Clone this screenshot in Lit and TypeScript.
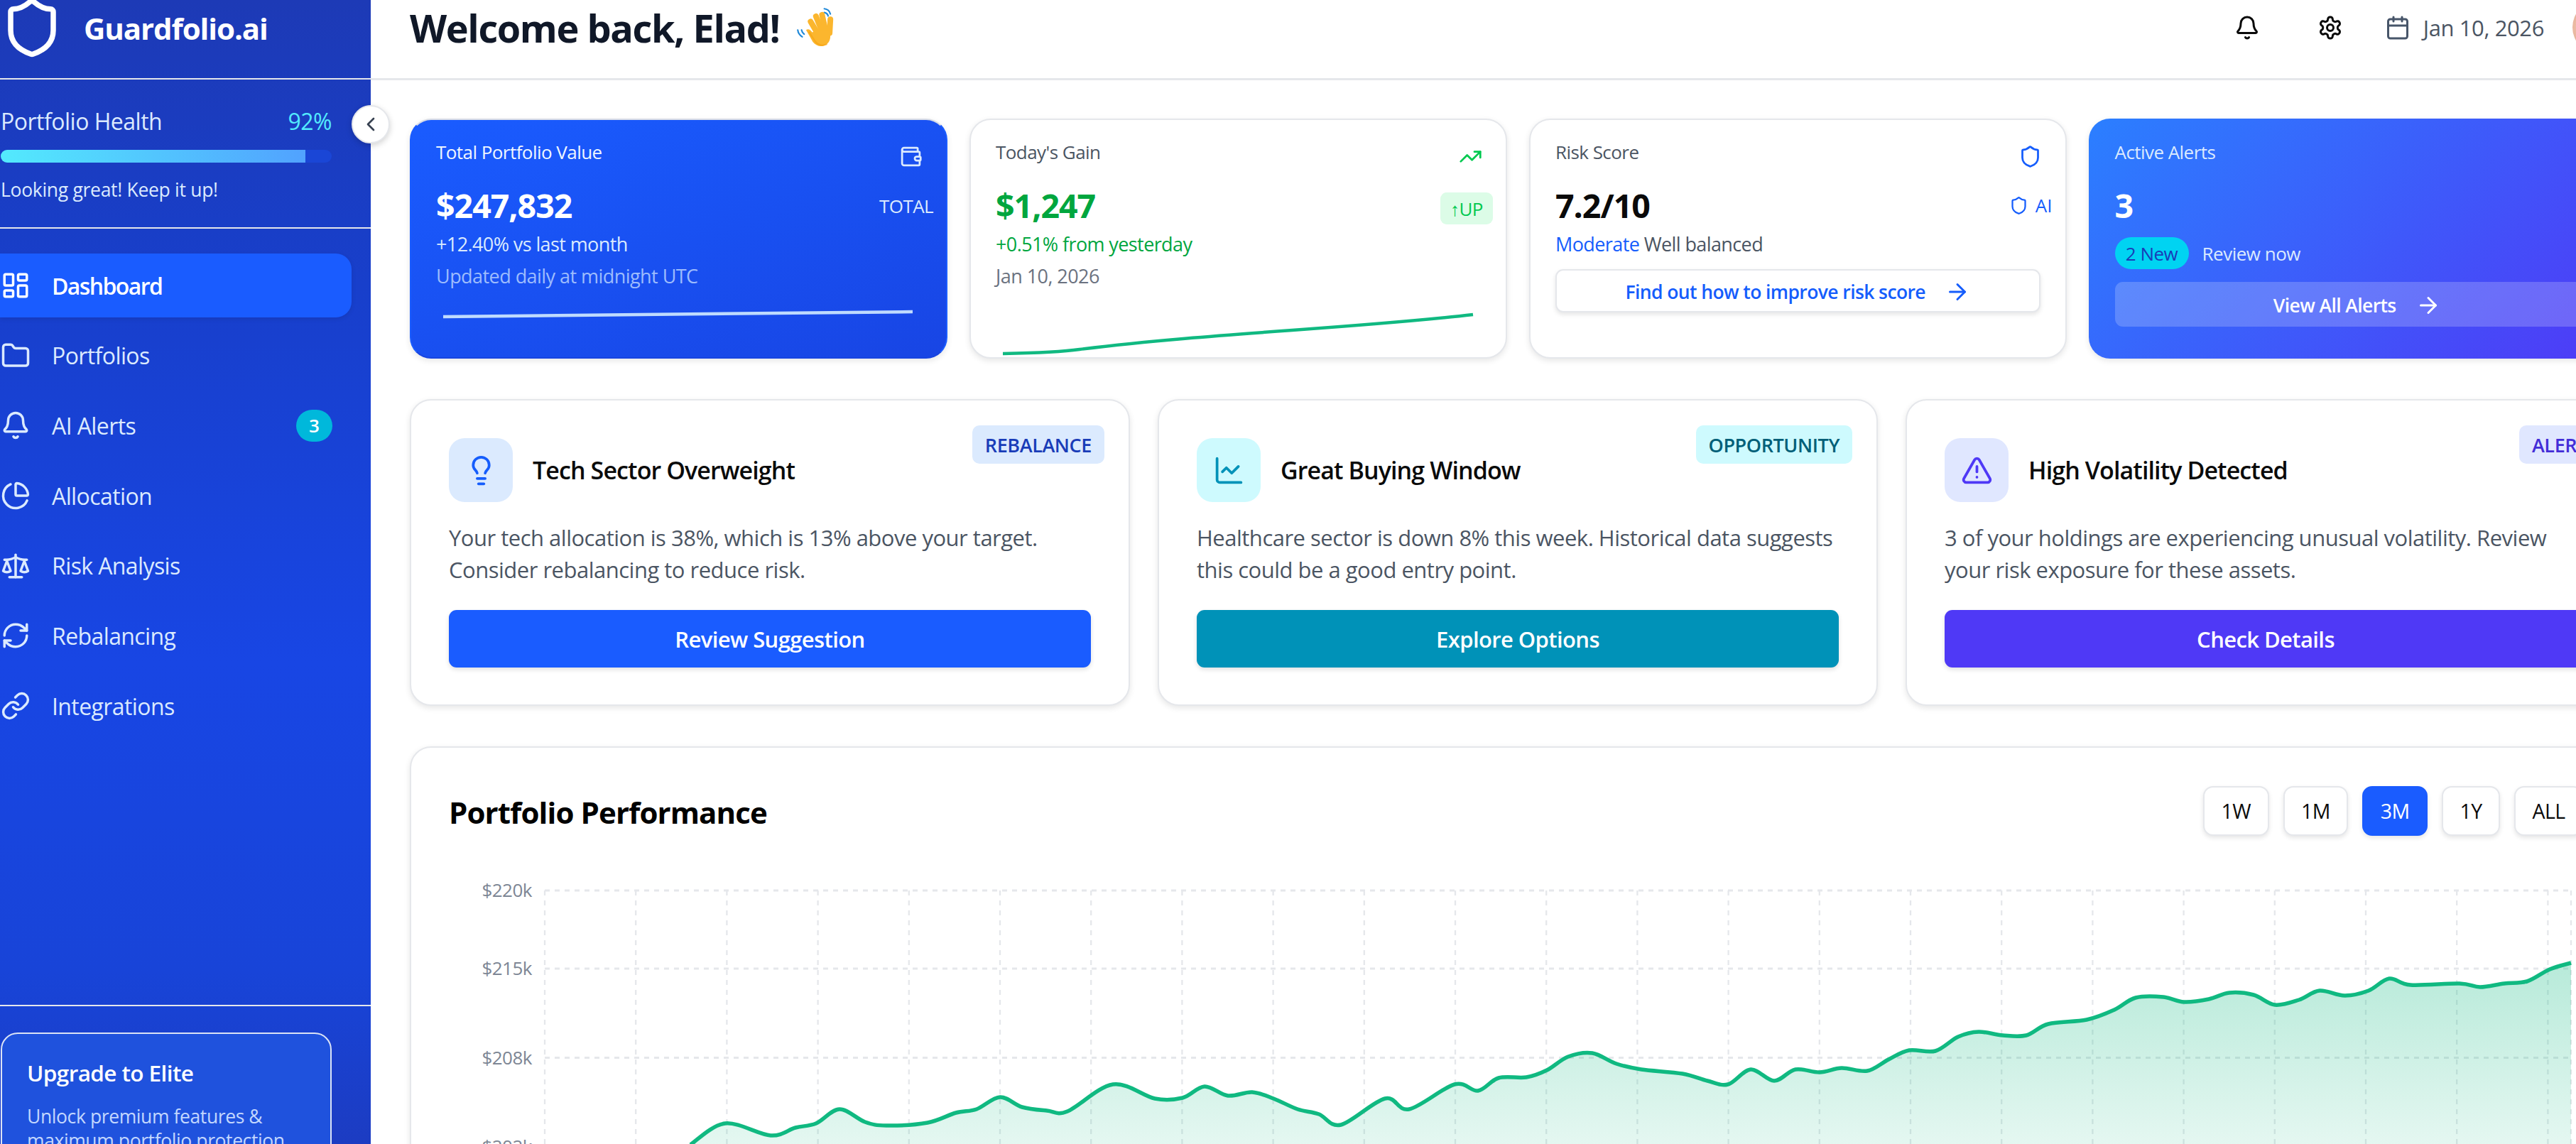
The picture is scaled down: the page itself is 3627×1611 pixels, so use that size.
import { LitElement, css, html, svg } from 'lit';
import { customElement } from 'lit/decorators.js';

const ICONS: Record<string, string[]> = {
  shield: ['M20 13c0 5-3.5 7.5-7.66 8.95a1 1 0 0 1-.67-.01C7.5 20.5 4 18 4 13V6a1 1 0 0 1 1-1c2 0 4.5-1.2 6.24-2.72a1.17 1.17 0 0 1 1.52 0C14.51 3.81 17 5 19 5a1 1 0 0 1 1 1z'],
  dashboard: ['M4 3h5a1 1 0 0 1 1 1v7a1 1 0 0 1-1 1H4a1 1 0 0 1-1-1V4a1 1 0 0 1 1-1z', 'M15 3h5a1 1 0 0 1 1 1v3a1 1 0 0 1-1 1h-5a1 1 0 0 1-1-1V4a1 1 0 0 1 1-1z', 'M15 12h5a1 1 0 0 1 1 1v7a1 1 0 0 1-1 1h-5a1 1 0 0 1-1-1v-7a1 1 0 0 1 1-1z', 'M4 16h5a1 1 0 0 1 1 1v3a1 1 0 0 1-1 1H4a1 1 0 0 1-1-1v-3a1 1 0 0 1 1-1z'],
  folder: ['M20 20a2 2 0 0 0 2-2V8a2 2 0 0 0-2-2h-7.9a2 2 0 0 1-1.69-.9L9.6 3.9A2 2 0 0 0 7.93 3H4a2 2 0 0 0-2 2v13a2 2 0 0 0 2 2Z'],
  bell: ['M10.268 21a2 2 0 0 0 3.464 0', 'M3.262 15.326A1 1 0 0 0 4 17h16a1 1 0 0 0 .74-1.673C19.41 13.956 18 12.499 18 8A6 6 0 0 0 6 8c0 4.499-1.411 5.956-2.738 7.326'],
  pie: ['M21 12c.552 0 1.005-.449.95-.998a10 10 0 0 0-8.953-8.951c-.55-.055-.998.398-.998.95v8a1 1 0 0 0 1 1z', 'M21.21 15.89A10 10 0 1 1 8 2.83'],
  scale: ['m16 16 3-8 3 8c-.87.65-1.92 1-3 1s-2.13-.35-3-1Z', 'm2 16 3-8 3 8c-.87.65-1.92 1-3 1s-2.13-.35-3-1Z', 'M7 21h10', 'M12 3v18', 'M3 7h2c2 0 5-1 7-2 2 1 5 2 7 2h2'],
  refresh: ['M3 12a9 9 0 0 1 9-9 9.75 9.75 0 0 1 6.74 2.74L21 8', 'M21 3v5h-5', 'M21 12a9 9 0 0 1-9 9 9.75 9.75 0 0 1-6.74-2.74L3 16', 'M8 16H3v5'],
  link: ['M10 13a5 5 0 0 0 7.54.54l3-3a5 5 0 0 0-7.07-7.07l-1.72 1.71', 'M14 11a5 5 0 0 0-7.54-.54l-3 3a5 5 0 0 0 7.07 7.07l1.71-1.71'],
  settings: ['M12.22 2h-.44a2 2 0 0 0-2 2v.18a2 2 0 0 1-1 1.73l-.43.25a2 2 0 0 1-2 0l-.15-.08a2 2 0 0 0-2.73.73l-.22.38a2 2 0 0 0 .73 2.73l.15.1a2 2 0 0 1 1 1.72v.51a2 2 0 0 1-1 1.74l-.15.09a2 2 0 0 0-.73 2.73l.22.38a2 2 0 0 0 2.73.73l.15-.08a2 2 0 0 1 2 0l.43.25a2 2 0 0 1 1 1.73V20a2 2 0 0 0 2 2h.44a2 2 0 0 0 2-2v-.18a2 2 0 0 1 1-1.73l.43-.25a2 2 0 0 1 2 0l.15.08a2 2 0 0 0 2.73-.73l.22-.39a2 2 0 0 0-.73-2.73l-.15-.08a2 2 0 0 1-1-1.74v-.5a2 2 0 0 1 1-1.74l.15-.09a2 2 0 0 0 .73-2.73l-.22-.38a2 2 0 0 0-2.73-.73l-.15.08a2 2 0 0 1-2 0l-.43-.25a2 2 0 0 1-1-1.73V4a2 2 0 0 0-2-2z', 'M15 12a3 3 0 1 1-6 0 3 3 0 0 1 6 0z'],
  calendar: ['M8 2v4', 'M16 2v4', 'M5 4h14a2 2 0 0 1 2 2v14a2 2 0 0 1-2 2H5a2 2 0 0 1-2-2V6a2 2 0 0 1 2-2z', 'M3 10h18'],
  wallet: ['M19 7V4a1 1 0 0 0-1-1H5a2 2 0 0 0 0 4h15a1 1 0 0 1 1 1v4h-3a2 2 0 0 0 0 4h3a1 1 0 0 0 1-1v-2a1 1 0 0 0-1-1', 'M3 5v14a2 2 0 0 0 2 2h15a1 1 0 0 0 1-1v-4'],
  trending: ['M22 7 13.5 15.5 8.5 10.5 2 17', 'M16 7h6v6'],
  arrow: ['M5 12h14', 'm12 5 7 7-7 7'],
  chevron: ['m15 18-6-6 6-6'],
  bulb: ['M15 14c.2-1 .7-1.7 1.5-2.5 1-.9 1.5-2.2 1.5-3.5A6 6 0 0 0 6 8c0 1 .2 2.2 1.5 3.5.7.7 1.3 1.5 1.5 2.5', 'M9 18h6', 'M10 22h4'],
  chart: ['M3 3v16a2 2 0 0 0 2 2h16', 'm19 9-5 5-4-4-3 3'],
  alert: ['m21.73 18-8-14a2 2 0 0 0-3.48 0l-8 14A2 2 0 0 0 4 21h16a2 2 0 0 0 1.73-3', 'M12 9v4', 'M12 17h.01'],
};

function icon(name: string, cls = '') {
  return html`<svg class="icon ${cls}" viewBox="0 0 24 24" fill="none" stroke="currentColor" stroke-width="2" stroke-linecap="round" stroke-linejoin="round">
    ${ICONS[name].map((d) => svg`<path d=${d}></path>`)}
  </svg>`;
}

const NAV = [
  { label: 'Dashboard', icon: 'dashboard', active: true },
  { label: 'Portfolios', icon: 'folder' },
  { label: 'AI Alerts', icon: 'bell', badge: '3' },
  { label: 'Allocation', icon: 'pie' },
  { label: 'Risk Analysis', icon: 'scale' },
  { label: 'Rebalancing', icon: 'refresh' },
  { label: 'Integrations', icon: 'link' },
];

const INSIGHTS = [
  { kind: 'blue', icon: 'bulb', tag: 'REBALANCE', title: 'Tech Sector Overweight', text: 'Your tech allocation is 38%, which is 13% above your target. Consider rebalancing to reduce risk.', action: 'Review Suggestion' },
  { kind: 'teal', icon: 'chart', tag: 'OPPORTUNITY', title: 'Great Buying Window', text: 'Healthcare sector is down 8% this week. Historical data suggests this could be a good entry point.', action: 'Explore Options' },
  { kind: 'indigo', icon: 'alert', tag: 'ALERT', title: 'High Volatility Detected', text: '3 of your holdings are experiencing unusual volatility. Review your risk exposure for these assets.', action: 'Check Details' },
];

// page coordinates of the performance curve, read off the screenshot
const CURVE: [number, number][] = [
  [972, 1612], [1021, 1582], [1085, 1599], [1120, 1588], [1149, 1582], [1182, 1562], [1218, 1580], [1248, 1585], [1306, 1581], [1346, 1567],
  [1375, 1562], [1408, 1545], [1439, 1559], [1474, 1564], [1503, 1565], [1567, 1527], [1626, 1547], [1665, 1546], [1696, 1530], [1729, 1543],
  [1763, 1538], [1793, 1547], [1827, 1562], [1857, 1569], [1888, 1584], [1950, 1547], [1984, 1562], [2048, 1527], [2081, 1536], [2110, 1518],
  [2149, 1517], [2178, 1507], [2208, 1488], [2242, 1483], [2276, 1498], [2311, 1506], [2369, 1512], [2404, 1522], [2433, 1527], [2465, 1506],
  [2498, 1522], [2528, 1506], [2562, 1510], [2593, 1504], [2629, 1508], [2659, 1492], [2688, 1479], [2725, 1480], [2757, 1460], [2786, 1453],
  [2820, 1458], [2853, 1458], [2884, 1442], [2938, 1436], [2977, 1422], [3007, 1405], [3046, 1404], [3075, 1411], [3110, 1407], [3139, 1398],
  [3173, 1401], [3203, 1415], [3237, 1408], [3266, 1395], [3301, 1402], [3335, 1395], [3364, 1378], [3394, 1387], [3463, 1385], [3492, 1390],
  [3526, 1385], [3558, 1382], [3590, 1365], [3620, 1356],
];

const CHART_X = 632;
const CHART_Y = 1230;
const PLOT_LEFT = 767 - CHART_X;
const PLOT_RIGHT = 3620 - CHART_X;
const GRID_Y = [1254, 1364, 1489.5, 1615].map((y) => y - CHART_Y);
const LABELS = ['$220k', '$215k', '$208k', '$202k'];

function smoothPath(points: [number, number][]) {
  const p = points.map(([x, y]) => [x - CHART_X, y - CHART_Y]);
  let d = `M${p[0][0]} ${p[0][1]}`;
  for (let i = 0; i < p.length - 1; i++) {
    const a = p[Math.max(i - 1, 0)];
    const b = p[i];
    const c = p[i + 1];
    const e = p[Math.min(i + 2, p.length - 1)];
    const c1x = b[0] + (c[0] - a[0]) / 6;
    const c1y = b[1] + (c[1] - a[1]) / 6;
    const c2x = c[0] - (e[0] - b[0]) / 6;
    const c2y = c[1] - (e[1] - b[1]) / 6;
    d += ` C${c1x.toFixed(1)} ${c1y.toFixed(1)} ${c2x.toFixed(1)} ${c2y.toFixed(1)} ${c[0]} ${c[1]}`;
  }
  return d;
}

@customElement('app-root')
export class AppRoot extends LitElement {
  static styles = css`
    :host {
      display: block;
      width: 3627px;
      height: 1611px;
      overflow: hidden;
      background: #fff;
      font-family: 'Open Sans', 'Noto Sans', sans-serif;
      color: #0a0a0a;
    }
    * { box-sizing: border-box; }
    .icon { display: block; flex: none; }
    .layout { display: flex; width: 3627px; height: 1611px; }

    /* sidebar */
    .sidebar {
      position: relative;
      z-index: 2;
      flex: none;
      width: 522px;
      height: 1611px;
      display: flex;
      flex-direction: column;
      color: #dbeafe;
      background: linear-gradient(180deg, #1d3ab6 0%, #183fcb 25%, #1846e4 58%, #1844d8 85%, #1c3cc2 100%);
    }
    .brand {
      height: 112px;
      padding-bottom: 32px;
      display: flex;
      align-items: center;
      gap: 28px;
      border-bottom: 2px solid #e5e7eb;
      color: #fff;
      font-size: 42px;
      font-weight: 700;
      letter-spacing: -1.1px;
    }
    .brand .icon { width: 90px; height: 90px; }
    .toggle {
      position: absolute;
      left: 495px;
      top: 148px;
      width: 54px;
      height: 54px;
      border-radius: 50%;
      background: #fff;
      border: 2px solid #e5e7eb;
      box-shadow: 0 3px 8px rgba(0, 0, 0, 0.18);
      color: #374151;
      display: flex;
      align-items: center;
      justify-content: center;
    }
    .toggle .icon { width: 32px; height: 32px; }
    .health {
      padding: 41px 55px 35px 1px;
      height: 210px;
      border-bottom: 2px solid #e5e7eb;
    }
    .health-head {
      display: flex;
      justify-content: space-between;
      font-size: 32px;
      line-height: 36px;
      font-weight: 500;
      letter-spacing: -0.5px;
    }
    .health-head b { font-weight: 500; color: #53eafd; }
    .bar {
      margin-top: 22px;
      height: 18px;
      border-radius: 9px;
      overflow: hidden;
      background: #1a46d6;
    }
    .bar div { height: 100%; background: linear-gradient(90deg, #53eafd, #51a2ff); }
    .health p { margin: 20px 0 0; font-size: 26.500px; line-height: 36px; letter-spacing: -0.3px; }
    .nav {
      flex: 1;
      padding-top: 35px;
      display: flex;
      flex-direction: column;
      gap: 8.7px;
    }
    .nav-item {
      width: 495px;
      height: 90px;
      padding: 0 27px 0 1px;
      display: flex;
      align-items: center;
      gap: 30px;
      border-radius: 0 22px 22px 0;
      font-size: 32px;
      font-weight: 500;
      letter-spacing: -0.6px;
    }
    .nav-item .icon { width: 42px; height: 42px; }
    .nav-item.active {
      background: #1a5cff;
      color: #fff;
      font-weight: 600;
      letter-spacing: -1.6px;
      box-shadow: 0 2px 6px rgba(0, 0, 0, 0.1);
    }
    .nav-badge {
      margin-left: auto;
      width: 51px;
      height: 45px;
      border-radius: 23px;
      background: #00b8db;
      color: #fff;
      font-size: 26px;
      font-weight: 600;
      display: flex;
      align-items: center;
      justify-content: center;
      letter-spacing: 0;
    }
    .upgrade-wrap {
      flex: none;
      height: 196px;
      padding: 37px 55px 0 1px;
      border-top: 2px solid #e5e7eb;
      overflow: hidden;
    }
    .upgrade {
      height: 260px;
      padding: 35px 30px 0 35px;
      border: 2px solid #dbe3f5;
      border-radius: 24px;
      background: #1f52dd;
    }
    .upgrade h3 { margin: 0; font-size: 31.500px; line-height: 40px; font-weight: 600; color: #fff; letter-spacing: -0.6px; }
    .upgrade p { margin: 24px 0 0; font-size: 26.500px; line-height: 34px; color: #c3d7fe; letter-spacing: -0.4px; }

    /* main */
    .main { flex: 1; min-width: 0; overflow: hidden; }
    .page { width: 3230px; padding: 0 55px; }
    .topbar {
      height: 113px;
      margin: 0 -55px;
      padding: 0 0 33px 55px;
      display: flex;
      align-items: center;
      border-bottom: 3px solid #e5e7eb;
    }
    .topbar h1 {
      margin: 0;
      font-size: 54px;
      font-weight: 700;
      color: #101828;
      letter-spacing: -1.4px;
      white-space: nowrap;
    }
    .wave { width: 62px; height: 62px; margin-left: 22px; flex: none; }
    .top-actions { margin-left: auto; display: flex; align-items: center; color: #0a0a0a; }
    .top-actions .icon { width: 36px; height: 36px; }
    .gear { margin-left: 81px; }
    .cal { margin-left: 59px; color: #475569; }
    .date { margin-left: 18px; font-size: 31px; color: #4b5563; letter-spacing: -0.4px; white-space: nowrap; }
    .avatar {
      margin-left: 40px;
      width: 75px;
      height: 75px;
      border-radius: 50%;
      background: radial-gradient(circle at 20% 50%, #f2c4ad, #c98a70);
      margin-right: 55px;
    }

    /* stat cards */
    .stats {
      margin-top: 54px;
      display: grid;
      grid-template-columns: repeat(4, 1fr);
      gap: 31px;
    }
    .stat {
      height: 338px;
      padding: 28px 35px 0;
      border: 2px solid #e5e7eb;
      border-radius: 30px;
      background: #fff;
      box-shadow: 0 3px 8px rgba(0, 0, 0, 0.1);
    }
    .stat.primary { color: #fff; border-top-color: #d8dce6; border-left-color: #1a5cff; border-right-color: #1a5cff; border-bottom-color: #1845e0; background: linear-gradient(160deg, #1a5cff, #1845e4); }
    .stat.alerts { color: #fff; border: none; padding: 30px 37px 0; background: linear-gradient(135deg, #2b7fff, #4f39f6); }
    .stat-head {
      height: 36px;
      margin-bottom: 28px;
      display: flex;
      justify-content: space-between;
      font-size: 26px;
      line-height: 34px;
      font-weight: 500;
      letter-spacing: -0.55px;
      color: #4b5563;
    }
    .primary .stat-head { color: #eff6ff; }
    .alerts .stat-head { color: #dbeafe; }
    .stat-head .icon { width: 33px; height: 33px; margin: 7px -2px 0 0; }
    .ic-white { color: #dbeafe; }
    .ic-green { color: #00c950; }
    .ic-blue { color: #155dfc; }
    .value-row {
      height: 56px;
      margin-right: -17px;
      display: flex;
      align-items: center;
      justify-content: space-between;
    }
    .value { font-size: 46.500px; line-height: 56px; font-weight: 700; letter-spacing: -1px; }
    .green { color: #00a63e; }
    .tag-total { font-size: 26px; font-weight: 500; color: #dbeafe; letter-spacing: -0.6px; margin-top: 2px; }
    .tag-up {
      height: 45px;
      width: 74px;
      margin-top: 9px;
      border-radius: 9px;
      background: #dcfce7;
      color: #00c950;
      font-size: 26px;
      font-weight: 500;
      display: flex;
      align-items: center;
      justify-content: center;
      letter-spacing: -0.6px;
    }
    .tag-ai { display: flex; align-items: center; gap: 10px; color: #155dfc; font-size: 26px; font-weight: 500; }
    .tag-ai .icon { width: 27px; height: 27px; }
    .sub { margin-top: 8px; font-size: 27px; line-height: 38px; letter-spacing: -0.6px; }
    .primary .sub { color: #dbeafe; }
    .meta { margin-top: 7px; font-size: 27px; line-height: 38px; letter-spacing: -0.55px; color: #6b7280; }
    .primary .meta { color: #9dbcfd; }
    .spark { display: block; width: 683px; height: 90px; margin-top: 7px; overflow: visible; }
    .risk-sub { color: #4b5563; }
    .risk-sub b { font-weight: 500; color: #155dfc; }
    .card-btn {
      margin-top: 16px;
      height: 61px;
      padding-top: 2px;
      border-radius: 11px;
      display: flex;
      align-items: center;
      justify-content: center;
      gap: 27px;
      font-size: 26.500px;
      font-weight: 600;
      letter-spacing: -0.6px;
      color: #155dfc;
      background: #fff;
      border: 2px solid #e5e7eb;
      box-shadow: 0 3px 6px rgba(0, 0, 0, 0.1);
    }
    .card-btn .icon { width: 36px; height: 36px; }
    .alerts .card-btn { margin-top: 18px; height: 63px; color: #fff; border: none; background: rgba(255, 255, 255, 0.2); box-shadow: none; }
    .new-row { margin-top: 17px; display: flex; align-items: center; gap: 19px; font-size: 26px; letter-spacing: -0.5px; color: #dbeafe; }
    .new-badge {
      width: 104px;
      height: 45px;
      border-radius: 23px;
      background: #00d3f2;
      color: #193cb8;
      font-weight: 500;
      display: flex;
      align-items: center;
      justify-content: center;
    }

    /* insights */
    .insights {
      margin-top: 57px;
      display: grid;
      grid-template-columns: repeat(3, 1fr);
      gap: 39px;
    }
    .insight {
      position: relative;
      height: 432px;
      padding: 53px;
      border: 2px solid #e5e7eb;
      border-radius: 30px;
      background: #fff;
      box-shadow: 0 3px 8px rgba(0, 0, 0, 0.1);
    }
    .insight-tag {
      position: absolute;
      top: 35px;
      right: 34px;
      height: 54px;
      padding: 0 18px;
      border-radius: 10px;
      display: flex;
      align-items: center;
      font-size: 27px;
      font-weight: 600;
      letter-spacing: -0.4px;
    }
    .insight-head { display: flex; align-items: center; gap: 28px; height: 90px; }
    .insight-icon {
      width: 90px;
      height: 90px;
      border-radius: 22px;
      display: flex;
      align-items: center;
      justify-content: center;
    }
    .insight-icon .icon { width: 45px; height: 45px; }
    .insight-head h3 { margin: 0; font-size: 34px; font-weight: 600; letter-spacing: -0.9px; }
    .insight p {
      margin: 28px 0 0;
      max-width: 900px;
      font-size: 31px;
      line-height: 45px;
      color: #4b5563;
      letter-spacing: -0.5px;
    }
    .insight-btn {
      margin-top: 34px;
      height: 81px;
      border-radius: 11px;
      display: flex;
      align-items: center;
      justify-content: center;
      color: #fff;
      font-size: 31px;
      font-weight: 600;
      letter-spacing: -0.6px;
      box-shadow: 0 3px 6px rgba(0, 0, 0, 0.12);
    }
    .blue .insight-icon, .blue .insight-tag { background: #dbeafe; }
    .blue .insight-icon { color: #155dfc; }
    .blue .insight-tag { color: #193cb8; }
    .blue .insight-btn { background: #1a5cff; }
    .teal .insight-icon, .teal .insight-tag { background: #cefafe; }
    .teal .insight-icon { color: #0092b8; }
    .teal .insight-tag { color: #005f78; }
    .teal .insight-btn { background: #0092b8; }
    .indigo .insight-icon, .indigo .insight-tag { background: #e0e7ff; }
    .indigo .insight-icon { color: #4f39f6; }
    .indigo .insight-tag { color: #432dd7; }
    .indigo .insight-btn { background: #4f39f6; }

    /* chart */
    .perf {
      margin-top: 57px;
      height: 760px;
      padding: 54px 53px 0;
      border: 2px solid #e5e7eb;
      border-radius: 30px;
      background: #fff;
      box-shadow: 0 3px 8px rgba(0, 0, 0, 0.1);
    }
    .perf-head { height: 70px; display: flex; align-items: center; justify-content: space-between; }
    .perf-head h2 { margin: 2px 0 0; font-size: 42px; font-weight: 700; color: #000; letter-spacing: -0.9px; }
    .ranges { display: flex; gap: 20px; margin-right: 5px; }
    .range {
      height: 70px;
      padding: 0 23.500px;
      border: 2px solid #e5e7eb;
      border-radius: 14px;
      background: #fff;
      display: flex;
      align-items: center;
      justify-content: center;
      font-size: 28.500px;
      font-weight: 500;
      letter-spacing: -0.6px;
      box-shadow: 0 3px 6px rgba(0, 0, 0, 0.1);
    }
    .range.on { background: #1a5cff; border-color: #1a5cff; color: #fff; }
    .chart { display: block; margin-top: 53px; width: 3000px; height: 540px; }
    .axis { font-size: 26px; fill: #7d8694; letter-spacing: -0.5px; }
  `;

  renderSidebar() {
    return html`
      <aside class="sidebar">
        <div class="brand">${icon('shield')}<span>Guardfolio.ai</span></div>
        <div class="toggle">${icon('chevron')}</div>
        <section class="health">
          <div class="health-head"><span>Portfolio Health</span><b>92%</b></div>
          <div class="bar"><div style="width:92%"></div></div>
          <p>Looking great! Keep it up!</p>
        </section>
        <nav class="nav">
          ${NAV.map((n) => html`
            <div class="nav-item ${n.active ? 'active' : ''}">
              ${icon(n.icon)}<span>${n.label}</span>
              ${n.badge ? html`<span class="nav-badge">${n.badge}</span>` : ''}
            </div>`)}
        </nav>
        <div class="upgrade-wrap">
          <div class="upgrade">
            <h3>Upgrade to Elite</h3>
            <p>Unlock premium features &amp; maximum portfolio protection</p>
          </div>
        </div>
      </aside>`;
  }

  renderWave() {
    return html`<svg class="wave" viewBox="0 0 58 58" fill="none" stroke-linecap="round">
      <g stroke="#1e88d8" stroke-width="2">
        <path d="M38 4c4 .5 7 3 8 7"></path>
        <path d="M38 9c2.500.5 4.500 2 5 4.500"></path>
        <path d="M3 32c.5 4 2.500 7 6 9"></path>
        <path d="M8 32c.5 2.500 1.500 4 3.500 5.500"></path>
      </g>
      <g stroke="#fbb62e" stroke-width="7.500">
        <path d="M20 21l10 17"></path>
        <path d="M27 14l8 20"></path>
        <path d="M35 12l5 22"></path>
        <path d="M46 18l-1 18"></path>
      </g>
      <path d="M14 32c3-2 6 0 8 3l6-2 17 0c2 8 1 14-4 18-6 4-13 3-18-3z" fill="#fbb62e"></path>
      <path d="M18 35l8 12c4 5 10 6 15 4" stroke="#f59e0b" stroke-width="2" opacity=".55"></path>
    </svg>`;
  }

  renderStats() {
    return html`
      <div class="stats">
        <div class="stat primary">
          <div class="stat-head"><span>Total Portfolio Value</span>${icon('wallet', 'ic-white')}</div>
          <div class="value-row"><span class="value">$247,832</span><span class="tag-total">TOTAL</span></div>
          <div class="sub">+12.40% vs last month</div>
          <div class="meta">Updated daily at midnight UTC</div>
          <svg class="spark" viewBox="0 0 683 90" fill="none"><path d="M10 31 L671 24" stroke="#bfdbfe" stroke-width="4.500"></path></svg>
        </div>
        <div class="stat">
          <div class="stat-head"><span>Today's Gain</span>${icon('trending', 'ic-green')}</div>
          <div class="value-row"><span class="value green">$1,247</span><span class="tag-up">↑UP</span></div>
          <div class="sub green">+0.51% from yesterday</div>
          <div class="meta">Jan 10, 2026</div>
          <svg class="spark" viewBox="0 0 683 90" fill="none"><path d="M10 83 C60 82 90 81 118 77 C300 54 500 48 672 28" stroke="#10b981" stroke-width="4.500"></path></svg>
        </div>
        <div class="stat">
          <div class="stat-head"><span>Risk Score</span>${icon('shield', 'ic-blue')}</div>
          <div class="value-row"><span class="value">7.2/10</span><span class="tag-ai">${icon('shield')}AI</span></div>
          <div class="sub risk-sub"><b>Moderate</b> Well balanced</div>
          <div class="card-btn"><span>Find out how to improve risk score</span>${icon('arrow')}</div>
        </div>
        <div class="stat alerts">
          <div class="stat-head"><span>Active Alerts</span></div>
          <div class="value-row"><span class="value">3</span></div>
          <div class="new-row"><span class="new-badge">2 New</span><span>Review now</span></div>
          <div class="card-btn"><span>View All Alerts</span>${icon('arrow')}</div>
        </div>
      </div>`;
  }

  renderChart() {
    const line = smoothPath(CURVE);
    const last = CURVE[CURVE.length - 1][0] - CHART_X;
    const first = CURVE[0][0] - CHART_X;
    const verticals = Array.from({ length: 23 }, (_, i) => PLOT_LEFT + i * 128.2);
    return html`
      <svg class="chart" viewBox="0 0 3000 540" fill="none">
        <defs>
          <linearGradient id="area" gradientUnits="userSpaceOnUse" x1="0" y1="126" x2="0" y2="533">
            <stop offset="0" stop-color="#10b981" stop-opacity="0.3"></stop>
            <stop offset="1" stop-color="#10b981" stop-opacity="0"></stop>
          </linearGradient>
        </defs>
        ${GRID_Y.map((y, i) => svg`
          <line x1=${PLOT_LEFT} x2=${PLOT_RIGHT} y1=${y} y2=${y} stroke="#e5e7eb" stroke-width="3" stroke-dasharray="7 7"></line>
          <text class="axis" x="117" y=${y + 9} text-anchor="end">${LABELS[i]}</text>`)}
        ${verticals.map((x) => svg`<line x1=${x} x2=${x} y1=${GRID_Y[0]} y2="540" stroke="#e5e7eb" stroke-width="2.300" stroke-dasharray="7 7"></line>`)}
        <line x1=${PLOT_RIGHT} x2=${PLOT_RIGHT} y1=${GRID_Y[0]} y2="540" stroke="#e5e7eb" stroke-width="2.300" stroke-dasharray="7 7"></line>
        <path d="${line} L${last} 540 L${first} 540 Z" fill="url(#area)"></path>
        <path d=${line} stroke="#10b981" stroke-width="5.500" stroke-linejoin="round"></path>
      </svg>`;
  }

  render() {
    return html`
      <div class="layout">
        ${this.renderSidebar()}
        <main class="main">
          <div class="page">
            <header class="topbar">
              <h1>Welcome back, Elad!</h1>
              ${this.renderWave()}
              <div class="top-actions">
                ${icon('bell')}
                ${icon('settings', 'gear')}
                ${icon('calendar', 'cal')}
                <span class="date">Jan 10, 2026</span>
                <div class="avatar"></div>
              </div>
            </header>
            ${this.renderStats()}
            <div class="insights">
              ${INSIGHTS.map((c) => html`
                <article class="insight ${c.kind}">
                  <span class="insight-tag">${c.tag}</span>
                  <div class="insight-head">
                    <div class="insight-icon">${icon(c.icon)}</div>
                    <h3>${c.title}</h3>
                  </div>
                  <p>${c.text}</p>
                  <div class="insight-btn">${c.action}</div>
                </article>`)}
            </div>
            <section class="perf">
              <div class="perf-head">
                <h2>Portfolio Performance</h2>
                <div class="ranges">
                  ${['1W', '1M', '3M', '1Y', 'ALL'].map((r) => html`<div class="range ${r === '3M' ? 'on' : ''}">${r}</div>`)}
                </div>
              </div>
              ${this.renderChart()}
            </section>
          </div>
        </main>
      </div>`;
  }
}
